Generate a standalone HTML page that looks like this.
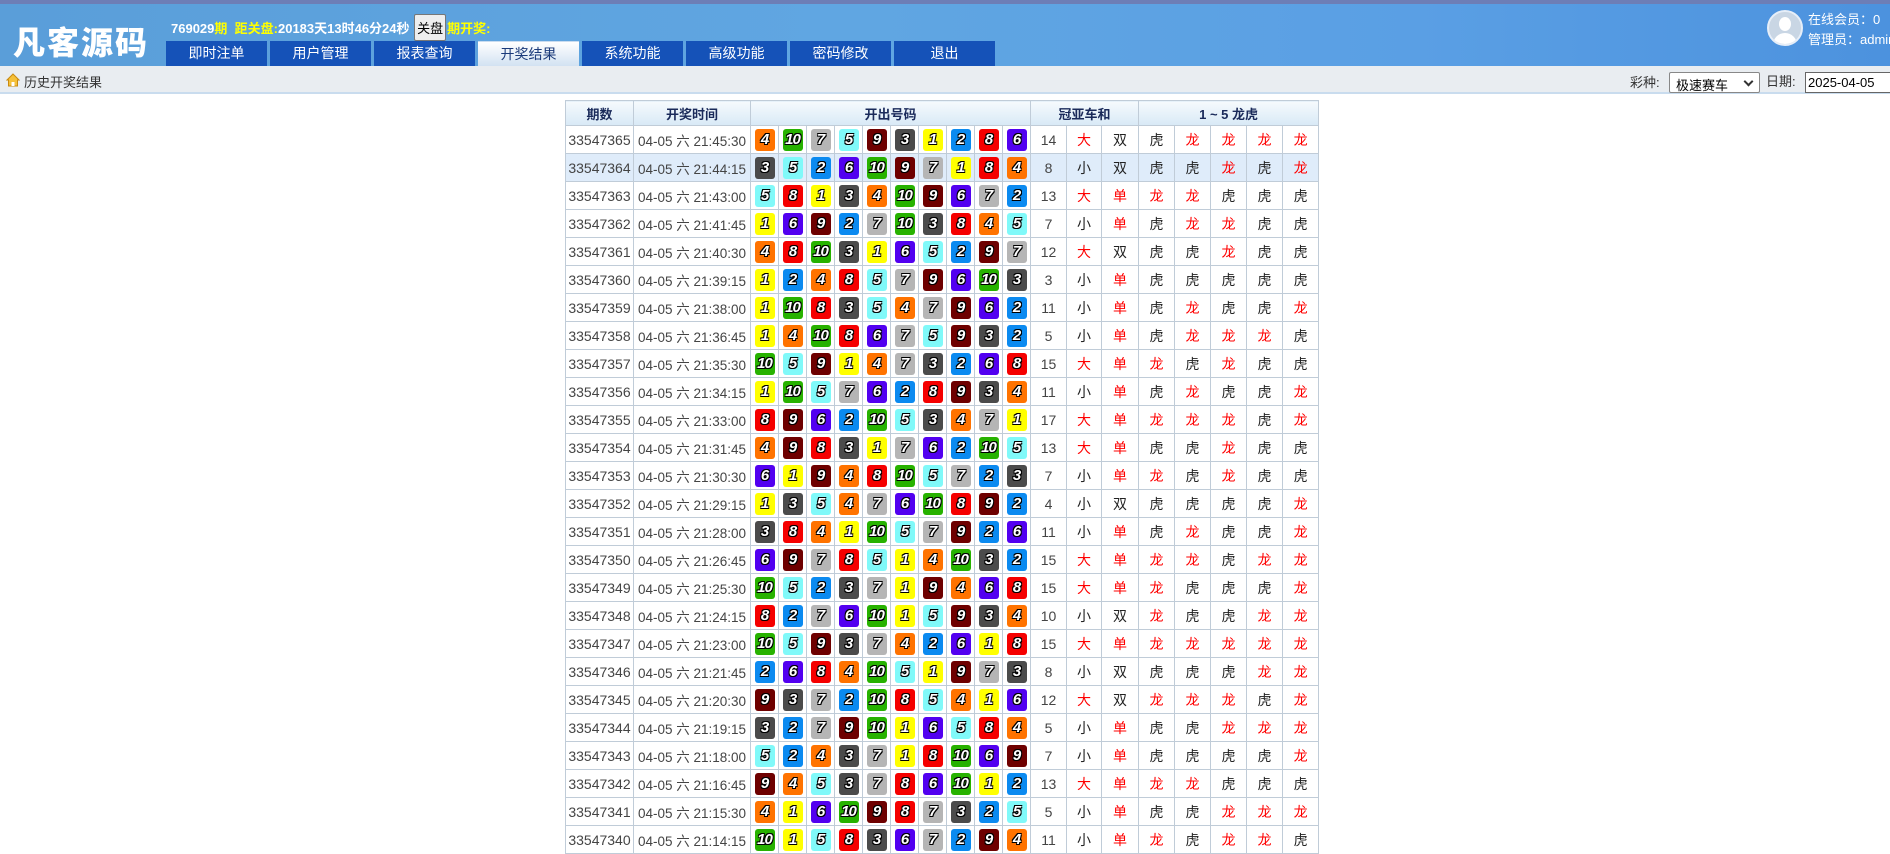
<!DOCTYPE html>
<html><head><meta charset="utf-8">
<style>
*{margin:0;padding:0;box-sizing:border-box}
html,body{width:1890px;height:853px;overflow:hidden;background:#fff;font-family:"Liberation Sans","Noto Sans CJK SC",sans-serif;font-size:13px;color:#333}
#top{position:absolute;left:0;top:0;width:1890px;height:66px;background:linear-gradient(90deg,#5a9ed9 0%,#60a6e2 45%,#5a9fe4 75%,#4c92de 100%);border-top:4px solid #6d7eb6}
#logo{position:absolute;left:13px;top:14px;font-size:32px;font-weight:900;color:#fff;letter-spacing:2px;font-family:"Noto Sans CJK SC",sans-serif}
#info{position:absolute;left:171px;top:10px;font-size:13px;font-weight:bold;color:#fff;white-space:nowrap}
#info .y{color:#ffff00}
#info .btn{display:inline-block;background:#eee;color:#000;border:1px solid #777;border-radius:2px;font-weight:normal;padding:3px 2px;margin:0 1px}
#nav{position:absolute;left:166px;top:37px}
#nav a{position:absolute;top:0;width:101px;height:25px;background:#1552b8;color:#fff;font-size:14px;text-align:center;line-height:25px;text-decoration:none}
#nav a.on{background:linear-gradient(#fff,#d2e2f2);color:#1a3a7a;border-top:1px solid #c8dcf0}
#user{position:absolute;left:1767px;top:10px;width:36px;height:36px;border-radius:50%;border:2px solid #e6eef8;background:#c9d6e4;overflow:hidden}
#user:before{content:"";position:absolute;left:10px;top:5px;width:12px;height:14px;border-radius:50%;background:#fff}
#user:after{content:"";position:absolute;left:4px;top:21px;width:24px;height:14px;border-radius:12px 12px 0 0;background:#fff}
#uinfo{position:absolute;left:1808px;top:10px;color:#fff;font-size:13px;line-height:20px;white-space:nowrap}
#bar{position:absolute;left:0;top:66px;width:1890px;height:28px;background:#e9edf1;border-bottom:2px solid #c9dcee}
#bar .t{position:absolute;left:24px;top:6px;font-size:13px;color:#333}
#home{position:absolute;left:6px;top:7px}
#sel{position:absolute;left:1669px;top:72px;width:91px;height:21px;border:1px solid #888;background:#fff;border-radius:2px;font-size:13px;padding:2px 6px;color:#000}
#sel:after{content:"";position:absolute;right:7px;top:5px;width:5px;height:5px;border-right:2px solid #333;border-bottom:2px solid #333;transform:rotate(45deg)}
#dl{position:absolute;left:1766px;top:71px;font-size:13px}
#dt{position:absolute;left:1805px;top:72px;width:90px;height:21px;border:1px solid #666;background:#fff;font-size:13px;padding:2px 2px;color:#000}
table{position:absolute;left:565px;top:100px;border-collapse:collapse;table-layout:fixed;width:752px}
td,th{border:1px solid #c0ccd8;text-align:center;height:28px;white-space:nowrap;padding:0}
th{height:25px;background:linear-gradient(#f6fafd,#d8e9f6);color:#1a2a5a;font-weight:bold;font-size:13px}
td{font-size:14px;color:#444}
tr td:nth-child(2){font-size:13.5px}
tr.h td{background:#dfecfa}
i{display:inline-block;width:20px;height:22px;border-radius:3px;font-style:italic;font-weight:bold;font-size:15px;line-height:22px;color:#fff;vertical-align:middle;letter-spacing:-1px;text-shadow:-1px -1px 0 #000,1px -1px 0 #000,-1px 1px 0 #000,1px 1px 0 #000}
.b1{background:#ffff00}.b2{background:#0b8af0}.b3{background:#4b4b4b}.b4{background:#ff7300}.b5{background:#80f9f9}.b6{background:#5200f0}.b7{background:#b5b5b5}.b8{background:#f50000}.b9{background:#6e0000}.b10{background:#27b200}
.r{color:#f00}.k{color:#222}
</style></head><body>
<div id="top">
<div id="logo">凡客源码</div>
<div id="info">769029<span class="y">期</span>&nbsp; <span class="y">距关盘:</span>20183天13时46分24秒 <span class="btn">关盘</span><span class="y">期开奖:</span></div>
<div id="nav">
<a style="left:0">即时注单</a><a style="left:104px">用户管理</a><a style="left:208px">报表查询</a><a class="on" style="left:312px">开奖结果</a><a style="left:416px">系统功能</a><a style="left:520px">高级功能</a><a style="left:624px">密码修改</a><a style="left:728px">退出</a>
</div>
</div>
<div id="user"></div>
<div id="uinfo">在线会员：0<br>管理员：admin</div>
<div id="bar">
<svg id="home" width="14" height="14" viewBox="0 0 14 14"><path d="M7 1 L13 7 L11.5 7 L11.5 13 L2.5 13 L2.5 7 L1 7 Z" fill="#f5c13a" stroke="#c98a10" stroke-width="1"/><rect x="5.5" y="9" width="3" height="4" fill="#fff"/></svg>
<span class="t">历史开奖结果</span>
</div>
<div style="position:absolute;left:1630px;top:72px;font-size:13px">彩种:</div>
<div id="sel">极速赛车</div>
<div id="dl">日期:</div>
<div id="dt">2025-04-05</div>

<table>
<colgroup><col style="width:68px"><col style="width:117px"><col span="10" style="width:28px"><col style="width:36px"><col style="width:35px"><col style="width:37px"><col span="5" style="width:36px"></colgroup>
<tr><th>期数</th><th>开奖时间</th><th colspan="10">开出号码</th><th colspan="3">冠亚车和</th><th colspan="5">1 ~ 5 龙虎</th></tr>
<tr><td>33547365</td><td>04-05 六 21:45:30</td><td><i class="b4">4</i></td><td><i class="b10">10</i></td><td><i class="b7">7</i></td><td><i class="b5">5</i></td><td><i class="b9">9</i></td><td><i class="b3">3</i></td><td><i class="b1">1</i></td><td><i class="b2">2</i></td><td><i class="b8">8</i></td><td><i class="b6">6</i></td><td>14</td><td class="r">大</td><td class="k">双</td><td class="k">虎</td><td class="r">龙</td><td class="r">龙</td><td class="r">龙</td><td class="r">龙</td></tr>
<tr class="h"><td>33547364</td><td>04-05 六 21:44:15</td><td><i class="b3">3</i></td><td><i class="b5">5</i></td><td><i class="b2">2</i></td><td><i class="b6">6</i></td><td><i class="b10">10</i></td><td><i class="b9">9</i></td><td><i class="b7">7</i></td><td><i class="b1">1</i></td><td><i class="b8">8</i></td><td><i class="b4">4</i></td><td>8</td><td class="k">小</td><td class="k">双</td><td class="k">虎</td><td class="k">虎</td><td class="r">龙</td><td class="k">虎</td><td class="r">龙</td></tr>
<tr><td>33547363</td><td>04-05 六 21:43:00</td><td><i class="b5">5</i></td><td><i class="b8">8</i></td><td><i class="b1">1</i></td><td><i class="b3">3</i></td><td><i class="b4">4</i></td><td><i class="b10">10</i></td><td><i class="b9">9</i></td><td><i class="b6">6</i></td><td><i class="b7">7</i></td><td><i class="b2">2</i></td><td>13</td><td class="r">大</td><td class="r">单</td><td class="r">龙</td><td class="r">龙</td><td class="k">虎</td><td class="k">虎</td><td class="k">虎</td></tr>
<tr><td>33547362</td><td>04-05 六 21:41:45</td><td><i class="b1">1</i></td><td><i class="b6">6</i></td><td><i class="b9">9</i></td><td><i class="b2">2</i></td><td><i class="b7">7</i></td><td><i class="b10">10</i></td><td><i class="b3">3</i></td><td><i class="b8">8</i></td><td><i class="b4">4</i></td><td><i class="b5">5</i></td><td>7</td><td class="k">小</td><td class="r">单</td><td class="k">虎</td><td class="r">龙</td><td class="r">龙</td><td class="k">虎</td><td class="k">虎</td></tr>
<tr><td>33547361</td><td>04-05 六 21:40:30</td><td><i class="b4">4</i></td><td><i class="b8">8</i></td><td><i class="b10">10</i></td><td><i class="b3">3</i></td><td><i class="b1">1</i></td><td><i class="b6">6</i></td><td><i class="b5">5</i></td><td><i class="b2">2</i></td><td><i class="b9">9</i></td><td><i class="b7">7</i></td><td>12</td><td class="r">大</td><td class="k">双</td><td class="k">虎</td><td class="k">虎</td><td class="r">龙</td><td class="k">虎</td><td class="k">虎</td></tr>
<tr><td>33547360</td><td>04-05 六 21:39:15</td><td><i class="b1">1</i></td><td><i class="b2">2</i></td><td><i class="b4">4</i></td><td><i class="b8">8</i></td><td><i class="b5">5</i></td><td><i class="b7">7</i></td><td><i class="b9">9</i></td><td><i class="b6">6</i></td><td><i class="b10">10</i></td><td><i class="b3">3</i></td><td>3</td><td class="k">小</td><td class="r">单</td><td class="k">虎</td><td class="k">虎</td><td class="k">虎</td><td class="k">虎</td><td class="k">虎</td></tr>
<tr><td>33547359</td><td>04-05 六 21:38:00</td><td><i class="b1">1</i></td><td><i class="b10">10</i></td><td><i class="b8">8</i></td><td><i class="b3">3</i></td><td><i class="b5">5</i></td><td><i class="b4">4</i></td><td><i class="b7">7</i></td><td><i class="b9">9</i></td><td><i class="b6">6</i></td><td><i class="b2">2</i></td><td>11</td><td class="k">小</td><td class="r">单</td><td class="k">虎</td><td class="r">龙</td><td class="k">虎</td><td class="k">虎</td><td class="r">龙</td></tr>
<tr><td>33547358</td><td>04-05 六 21:36:45</td><td><i class="b1">1</i></td><td><i class="b4">4</i></td><td><i class="b10">10</i></td><td><i class="b8">8</i></td><td><i class="b6">6</i></td><td><i class="b7">7</i></td><td><i class="b5">5</i></td><td><i class="b9">9</i></td><td><i class="b3">3</i></td><td><i class="b2">2</i></td><td>5</td><td class="k">小</td><td class="r">单</td><td class="k">虎</td><td class="r">龙</td><td class="r">龙</td><td class="r">龙</td><td class="k">虎</td></tr>
<tr><td>33547357</td><td>04-05 六 21:35:30</td><td><i class="b10">10</i></td><td><i class="b5">5</i></td><td><i class="b9">9</i></td><td><i class="b1">1</i></td><td><i class="b4">4</i></td><td><i class="b7">7</i></td><td><i class="b3">3</i></td><td><i class="b2">2</i></td><td><i class="b6">6</i></td><td><i class="b8">8</i></td><td>15</td><td class="r">大</td><td class="r">单</td><td class="r">龙</td><td class="k">虎</td><td class="r">龙</td><td class="k">虎</td><td class="k">虎</td></tr>
<tr><td>33547356</td><td>04-05 六 21:34:15</td><td><i class="b1">1</i></td><td><i class="b10">10</i></td><td><i class="b5">5</i></td><td><i class="b7">7</i></td><td><i class="b6">6</i></td><td><i class="b2">2</i></td><td><i class="b8">8</i></td><td><i class="b9">9</i></td><td><i class="b3">3</i></td><td><i class="b4">4</i></td><td>11</td><td class="k">小</td><td class="r">单</td><td class="k">虎</td><td class="r">龙</td><td class="k">虎</td><td class="k">虎</td><td class="r">龙</td></tr>
<tr><td>33547355</td><td>04-05 六 21:33:00</td><td><i class="b8">8</i></td><td><i class="b9">9</i></td><td><i class="b6">6</i></td><td><i class="b2">2</i></td><td><i class="b10">10</i></td><td><i class="b5">5</i></td><td><i class="b3">3</i></td><td><i class="b4">4</i></td><td><i class="b7">7</i></td><td><i class="b1">1</i></td><td>17</td><td class="r">大</td><td class="r">单</td><td class="r">龙</td><td class="r">龙</td><td class="r">龙</td><td class="k">虎</td><td class="r">龙</td></tr>
<tr><td>33547354</td><td>04-05 六 21:31:45</td><td><i class="b4">4</i></td><td><i class="b9">9</i></td><td><i class="b8">8</i></td><td><i class="b3">3</i></td><td><i class="b1">1</i></td><td><i class="b7">7</i></td><td><i class="b6">6</i></td><td><i class="b2">2</i></td><td><i class="b10">10</i></td><td><i class="b5">5</i></td><td>13</td><td class="r">大</td><td class="r">单</td><td class="k">虎</td><td class="k">虎</td><td class="r">龙</td><td class="k">虎</td><td class="k">虎</td></tr>
<tr><td>33547353</td><td>04-05 六 21:30:30</td><td><i class="b6">6</i></td><td><i class="b1">1</i></td><td><i class="b9">9</i></td><td><i class="b4">4</i></td><td><i class="b8">8</i></td><td><i class="b10">10</i></td><td><i class="b5">5</i></td><td><i class="b7">7</i></td><td><i class="b2">2</i></td><td><i class="b3">3</i></td><td>7</td><td class="k">小</td><td class="r">单</td><td class="r">龙</td><td class="k">虎</td><td class="r">龙</td><td class="k">虎</td><td class="k">虎</td></tr>
<tr><td>33547352</td><td>04-05 六 21:29:15</td><td><i class="b1">1</i></td><td><i class="b3">3</i></td><td><i class="b5">5</i></td><td><i class="b4">4</i></td><td><i class="b7">7</i></td><td><i class="b6">6</i></td><td><i class="b10">10</i></td><td><i class="b8">8</i></td><td><i class="b9">9</i></td><td><i class="b2">2</i></td><td>4</td><td class="k">小</td><td class="k">双</td><td class="k">虎</td><td class="k">虎</td><td class="k">虎</td><td class="k">虎</td><td class="r">龙</td></tr>
<tr><td>33547351</td><td>04-05 六 21:28:00</td><td><i class="b3">3</i></td><td><i class="b8">8</i></td><td><i class="b4">4</i></td><td><i class="b1">1</i></td><td><i class="b10">10</i></td><td><i class="b5">5</i></td><td><i class="b7">7</i></td><td><i class="b9">9</i></td><td><i class="b2">2</i></td><td><i class="b6">6</i></td><td>11</td><td class="k">小</td><td class="r">单</td><td class="k">虎</td><td class="r">龙</td><td class="k">虎</td><td class="k">虎</td><td class="r">龙</td></tr>
<tr><td>33547350</td><td>04-05 六 21:26:45</td><td><i class="b6">6</i></td><td><i class="b9">9</i></td><td><i class="b7">7</i></td><td><i class="b8">8</i></td><td><i class="b5">5</i></td><td><i class="b1">1</i></td><td><i class="b4">4</i></td><td><i class="b10">10</i></td><td><i class="b3">3</i></td><td><i class="b2">2</i></td><td>15</td><td class="r">大</td><td class="r">单</td><td class="r">龙</td><td class="r">龙</td><td class="k">虎</td><td class="r">龙</td><td class="r">龙</td></tr>
<tr><td>33547349</td><td>04-05 六 21:25:30</td><td><i class="b10">10</i></td><td><i class="b5">5</i></td><td><i class="b2">2</i></td><td><i class="b3">3</i></td><td><i class="b7">7</i></td><td><i class="b1">1</i></td><td><i class="b9">9</i></td><td><i class="b4">4</i></td><td><i class="b6">6</i></td><td><i class="b8">8</i></td><td>15</td><td class="r">大</td><td class="r">单</td><td class="r">龙</td><td class="k">虎</td><td class="k">虎</td><td class="k">虎</td><td class="r">龙</td></tr>
<tr><td>33547348</td><td>04-05 六 21:24:15</td><td><i class="b8">8</i></td><td><i class="b2">2</i></td><td><i class="b7">7</i></td><td><i class="b6">6</i></td><td><i class="b10">10</i></td><td><i class="b1">1</i></td><td><i class="b5">5</i></td><td><i class="b9">9</i></td><td><i class="b3">3</i></td><td><i class="b4">4</i></td><td>10</td><td class="k">小</td><td class="k">双</td><td class="r">龙</td><td class="k">虎</td><td class="k">虎</td><td class="r">龙</td><td class="r">龙</td></tr>
<tr><td>33547347</td><td>04-05 六 21:23:00</td><td><i class="b10">10</i></td><td><i class="b5">5</i></td><td><i class="b9">9</i></td><td><i class="b3">3</i></td><td><i class="b7">7</i></td><td><i class="b4">4</i></td><td><i class="b2">2</i></td><td><i class="b6">6</i></td><td><i class="b1">1</i></td><td><i class="b8">8</i></td><td>15</td><td class="r">大</td><td class="r">单</td><td class="r">龙</td><td class="r">龙</td><td class="r">龙</td><td class="r">龙</td><td class="r">龙</td></tr>
<tr><td>33547346</td><td>04-05 六 21:21:45</td><td><i class="b2">2</i></td><td><i class="b6">6</i></td><td><i class="b8">8</i></td><td><i class="b4">4</i></td><td><i class="b10">10</i></td><td><i class="b5">5</i></td><td><i class="b1">1</i></td><td><i class="b9">9</i></td><td><i class="b7">7</i></td><td><i class="b3">3</i></td><td>8</td><td class="k">小</td><td class="k">双</td><td class="k">虎</td><td class="k">虎</td><td class="k">虎</td><td class="r">龙</td><td class="r">龙</td></tr>
<tr><td>33547345</td><td>04-05 六 21:20:30</td><td><i class="b9">9</i></td><td><i class="b3">3</i></td><td><i class="b7">7</i></td><td><i class="b2">2</i></td><td><i class="b10">10</i></td><td><i class="b8">8</i></td><td><i class="b5">5</i></td><td><i class="b4">4</i></td><td><i class="b1">1</i></td><td><i class="b6">6</i></td><td>12</td><td class="r">大</td><td class="k">双</td><td class="r">龙</td><td class="r">龙</td><td class="r">龙</td><td class="k">虎</td><td class="r">龙</td></tr>
<tr><td>33547344</td><td>04-05 六 21:19:15</td><td><i class="b3">3</i></td><td><i class="b2">2</i></td><td><i class="b7">7</i></td><td><i class="b9">9</i></td><td><i class="b10">10</i></td><td><i class="b1">1</i></td><td><i class="b6">6</i></td><td><i class="b5">5</i></td><td><i class="b8">8</i></td><td><i class="b4">4</i></td><td>5</td><td class="k">小</td><td class="r">单</td><td class="k">虎</td><td class="k">虎</td><td class="r">龙</td><td class="r">龙</td><td class="r">龙</td></tr>
<tr><td>33547343</td><td>04-05 六 21:18:00</td><td><i class="b5">5</i></td><td><i class="b2">2</i></td><td><i class="b4">4</i></td><td><i class="b3">3</i></td><td><i class="b7">7</i></td><td><i class="b1">1</i></td><td><i class="b8">8</i></td><td><i class="b10">10</i></td><td><i class="b6">6</i></td><td><i class="b9">9</i></td><td>7</td><td class="k">小</td><td class="r">单</td><td class="k">虎</td><td class="k">虎</td><td class="k">虎</td><td class="k">虎</td><td class="r">龙</td></tr>
<tr><td>33547342</td><td>04-05 六 21:16:45</td><td><i class="b9">9</i></td><td><i class="b4">4</i></td><td><i class="b5">5</i></td><td><i class="b3">3</i></td><td><i class="b7">7</i></td><td><i class="b8">8</i></td><td><i class="b6">6</i></td><td><i class="b10">10</i></td><td><i class="b1">1</i></td><td><i class="b2">2</i></td><td>13</td><td class="r">大</td><td class="r">单</td><td class="r">龙</td><td class="r">龙</td><td class="k">虎</td><td class="k">虎</td><td class="k">虎</td></tr>
<tr><td>33547341</td><td>04-05 六 21:15:30</td><td><i class="b4">4</i></td><td><i class="b1">1</i></td><td><i class="b6">6</i></td><td><i class="b10">10</i></td><td><i class="b9">9</i></td><td><i class="b8">8</i></td><td><i class="b7">7</i></td><td><i class="b3">3</i></td><td><i class="b2">2</i></td><td><i class="b5">5</i></td><td>5</td><td class="k">小</td><td class="r">单</td><td class="k">虎</td><td class="k">虎</td><td class="r">龙</td><td class="r">龙</td><td class="r">龙</td></tr>
<tr><td>33547340</td><td>04-05 六 21:14:15</td><td><i class="b10">10</i></td><td><i class="b1">1</i></td><td><i class="b5">5</i></td><td><i class="b8">8</i></td><td><i class="b3">3</i></td><td><i class="b6">6</i></td><td><i class="b7">7</i></td><td><i class="b2">2</i></td><td><i class="b9">9</i></td><td><i class="b4">4</i></td><td>11</td><td class="k">小</td><td class="r">单</td><td class="r">龙</td><td class="k">虎</td><td class="r">龙</td><td class="r">龙</td><td class="k">虎</td></tr>
</table>
</body></html>
